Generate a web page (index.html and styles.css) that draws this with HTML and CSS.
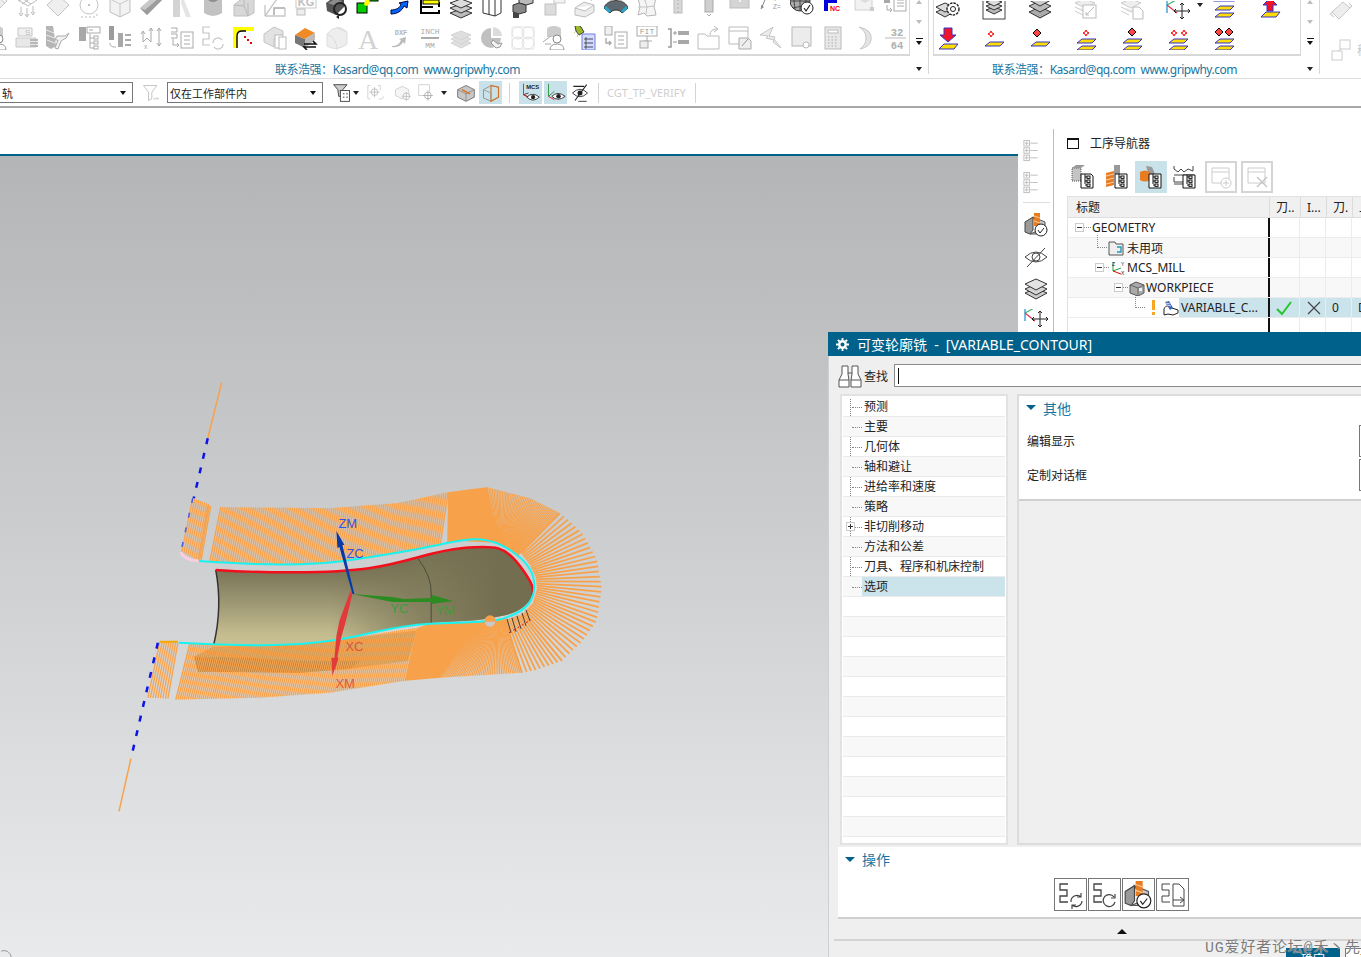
FILE: index.html
```html
<!DOCTYPE html>
<html lang="zh">
<head>
<meta charset="utf-8">
<title>可变轮廓铣</title>
<link rel="stylesheet" href="styles.css">
</head>
<body>
<svg class="defs" width="0" height="0">
<defs>
<symbol id="g-grid" viewBox="0 0 24 24"><path d="M3 5l9-5 10 5-9 6zM7 3l9 6M12 1l-8 5M16 3l-9 6" fill="none" stroke="#bdbdbd"/><path d="M6 12v7M12 13v8M18 11v7M4 18l2 3 2-3M10 19l2 3 2-3M16 17l2 3 2-3" fill="none" stroke="#bbb"/></symbol>
<symbol id="g-dia" viewBox="0 0 24 24"><path d="M12 0l11 10-11 11L1 10z" fill="#efefef" stroke="#c4c4c4"/></symbol>
<symbol id="g-circ" viewBox="0 0 24 24"><circle cx="12" cy="10" r="9" fill="none" stroke="#c4c4c4"/><circle cx="12" cy="10" r="1" fill="#aaa"/><path d="M4 22h14M20 19v4" stroke="#bbb" stroke-dasharray="2 2"/></symbol>
<symbol id="g-cyl" viewBox="0 0 24 24"><path d="M2 4v13l10 5 10-5V4L12 0z" fill="#f2f2f2" stroke="#c0c0c0"/><path d="M2 4l10 5 10-5M12 9v13" fill="none" stroke="#c8c8c8"/></symbol>
<symbol id="g-bar" viewBox="0 0 24 24"><path d="M1 13L16 0l7 5L8 20z" fill="#c8c8c8"/><path d="M1 13l7 7L23 5l-3-2L6 15z" fill="#9d9d9d"/></symbol>
<symbol id="g-k" viewBox="0 0 24 24"><path d="M3 0h7v22H3z" fill="#d4d4d4"/><path d="M12 0l9 22h-5L11 8z" fill="#e4e4e4"/></symbol>
<symbol id="g-ring" viewBox="0 0 24 24"><path d="M3 1h18v17q-9 6-18 0z" fill="#c2c2c2"/><ellipse cx="12" cy="4" rx="5" ry="3" fill="#8f8f8f"/></symbol>
<symbol id="g-block" viewBox="0 0 24 24"><path d="M2 10l10-8 10 2v14l-6 3H2z" fill="#d8d8d8" stroke="#c0c0c0"/><path d="M12 2v9l-10-1M12 11l4 10V8" fill="none" stroke="#b8b8b8"/></symbol>
<symbol id="g-tri" viewBox="0 0 24 24"><path d="M2 21L16 1M2 21V10M2 21h20v-8" fill="none" stroke="#c8c8c8" stroke-width="1.4"/><path d="M11 20v-7h11" fill="none" stroke="#aaa" stroke-width="1.5"/></symbol>
<symbol id="g-kg" viewBox="0 0 24 24"><rect x="2" y="0" width="20" height="13" fill="#fff" stroke="#c8c8c8"/><text x="12" y="11" font-size="11" font-weight="700" text-anchor="middle" fill="#bdbdbd" font-family="Liberation Sans">KG</text><rect x="3" y="14" width="8" height="6" fill="#eee" stroke="#bbb"/></symbol>
<symbol id="k-gear" viewBox="0 0 24 24"><path d="M1 8l8-6 10 2v8l-8 8-9-4z" fill="#555"/><path d="M3 8l7-4 7 2-6 5z" fill="#8b8b8b"/><circle cx="15" cy="14" r="6" fill="none" stroke="#222" stroke-width="2"/><path d="M14 20l-3 2 3 2z" fill="#222"/></symbol>
<symbol id="k-green" viewBox="0 0 24 24"><rect x="12" y="-3" width="10" height="9" fill="#0c0" stroke="#000"/><rect x="1" y="8" width="10" height="10" fill="#0c0" stroke="#000"/><path d="M9 5l4-1 1 4-3 3-3-1z" fill="#ff0"/></symbol>
<symbol id="k-prt" viewBox="0 0 24 24"><text x="12" y="4" font-size="8" font-weight="700" text-anchor="middle" fill="#00d" font-family="Liberation Mono">PRT</text><path d="M4 15c5 0 9-2 10-6l-2-1 9-2-1 7-3-2c-2 5-7 8-13 8z" fill="#06f" stroke="#003"/></symbol>
<symbol id="k-ladder" viewBox="0 0 24 24"><path d="M3 0v19M21 0v4M21 7v5M21 15v4" stroke="#000" stroke-width="2"/><rect x="5" y="5" width="16" height="4" fill="#ff0" stroke="#000"/><path d="M3 4h12M3 12h12M3 18h18" stroke="#000" stroke-width="2"/></symbol>
<symbol id="k-layers" viewBox="0 0 24 24"><g stroke="#333" fill="#bbb"><path d="M12 14l11 4-11 5-11-5z"/><path d="M12 9l11 4-11 5-11-5z" fill="#ccc"/><path d="M12 4l11 4-11 5L1 8z" fill="#ddd"/></g></symbol>
<symbol id="k-book" viewBox="0 0 24 24"><path d="M3 2l12-3 6 3v16l-6 3-12-3z" fill="#fff" stroke="#333"/><path d="M9 3v17M15 0v21" stroke="#333"/><path d="M3 2l6 1 12-1" fill="none" stroke="#333"/></symbol>
<symbol id="k-cubes" viewBox="0 0 24 24"><path d="M8 0l7-2 7 2v8l-7 2-7-2z" fill="#bbb" stroke="#333"/><path d="M2 10l6-2 7 2v7l-7 2-6-2z" fill="#888" stroke="#333"/><path d="M2 17l6 2v4H2z" fill="#444"/></symbol>
<symbol id="g-sq" viewBox="0 0 24 24"><rect x="12" y="-2" width="11" height="10" fill="#f4f4f4" stroke="#c8c8c8"/><rect x="3" y="9" width="11" height="11" fill="#dcdcdc" stroke="#c2c2c2"/></symbol>
<symbol id="g-blk2" viewBox="0 0 24 24"><path d="M2 13l9-6 10 3-9 6zM2 13v7l10 2 9-5v-7" fill="#ececec" stroke="#bdbdbd"/><path d="M14 4l4-2M18 6l3-5M22 2l2 3" stroke="#bbb" stroke-dasharray="1 2" fill="none"/></symbol>
<symbol id="k-pipe" viewBox="0 0 24 24"><path d="M0 13c3-10 21-10 24 0l-6 5c-3-4-9-4-12 0z" fill="#5e6870" stroke="#333"/><path d="M1 12l5 5M23 12l-5 5" stroke="#29a3c5" stroke-width="3"/><path d="M6 6q6-3 12 0" stroke="#aaa" fill="none"/></symbol>
<symbol id="g-patch" viewBox="0 0 24 24"><path d="M3 3l7 2 5-5 6 3-2 8 2 9-9 1-3-3-6 2 2-8z" fill="#f5f5f5" stroke="#b6b6b6"/><path d="M10 5l2 7-9 0M12 12l7-1M12 12l-1 7" stroke="#c4c4c4" fill="none"/></symbol>
<symbol id="g-col" viewBox="0 0 24 24"><rect x="8" y="-4" width="8" height="22" fill="#d8d8d8" stroke="#bcbcbc"/><path d="M12-4v22" stroke="#b0b0b0" stroke-dasharray="2 2"/></symbol>
<symbol id="g-col2" viewBox="0 0 24 24"><rect x="8" y="-4" width="8" height="21" fill="#cfcfcf" stroke="#a9a9a9"/><path d="M10 19l2 2 2-2" fill="none" stroke="#aaa"/></symbol>
<symbol id="g-plate" viewBox="0 0 24 24"><rect x="2" y="-6" width="19" height="19" fill="#d4d4d4" stroke="#bdbdbd"/><circle cx="12" cy="6" r="1" fill="#fff"/></symbol>
<symbol id="g-yz" viewBox="0 0 24 24"><path d="M9-2L2 14" stroke="#888"/><path d="M2 14l0-4 3 2z" fill="#888"/><text x="14" y="6" font-size="6.5" fill="#999" font-family="Liberation Sans">Y=</text><text x="14" y="14" font-size="6.5" fill="#999" font-family="Liberation Sans">Z=</text></symbol>
<symbol id="k-globe" viewBox="0 0 24 24"><circle cx="10" cy="6" r="10" fill="#aaa" stroke="#333"/><path d="M0 6h20M10-4v20M3-1q7 3 14 0M3 13q7-3 14 0M5-2q-2 8 0 16M15-2q2 8 0 16" fill="none" stroke="#333" stroke-width=".8"/><circle cx="17" cy="13" r="6" fill="#fff" stroke="#222"/><path d="M14 13l2 3 4-6" fill="none" stroke="#222" stroke-width="1.2"/></symbol>
<symbol id="k-pnc" viewBox="0 0 24 24"><path d="M3-4h13v12H7v8H3z M7 0v4h5V0z" fill="#00d" fill-rule="evenodd"/><text x="9" y="16" font-size="7" font-weight="700" fill="#f00" font-family="Liberation Sans">NC</text></symbol>
<symbol id="g-doc" viewBox="0 0 24 24"><path d="M3-2h17v17H3z" fill="#f2f2f2" stroke="#d0d0d0"/><path d="M8 5l5-3 5 3-5 3z" fill="#ddd"/><rect x="18" y="12" width="4" height="4" fill="#ccc"/></symbol>
<symbol id="g-arrl" viewBox="0 0 24 24"><rect x="1" y="-4" width="6" height="12" fill="#a8a8a8"/><path d="M4 10v5h5M7 13l2 2-2 2" fill="none" stroke="#aaa"/><rect x="11" y="0" width="12" height="16" fill="#fff" stroke="#aaa"/><path d="M14 5h7M14 8h7M14 11h7" stroke="#aaa"/></symbol>

<symbol id="g-stack" viewBox="0 0 24 24"><path d="M3 2h14v8H3z" fill="#f0f0f0" stroke="#c6c6c6"/><path d="M1 12h20v9H1z" fill="#e8e8e8" stroke="#c8c8c8"/><text x="10" y="9" font-size="8" fill="#bbb" font-family="Liberation Sans">S</text><path d="M15 14h8M15 17h8M15 20h8" stroke="#b8b8b8" stroke-width="2"/></symbol>
<symbol id="g-drill" viewBox="0 0 24 24"><path d="M0 0h7l3 20-5 3-5-3z" fill="#b5b5b5"/><path d="M0 4l8 3M0 9l9 3M1 14l8 3" stroke="#e8e8e8"/><path d="M11 10h8l4-3-3 5-5 3-3 8-3-1 3-8h-3z" fill="#f2f2f2" stroke="#aaa"/></symbol>
<symbol id="g-tree" viewBox="0 0 24 24"><rect x="2" y="1" width="7" height="14" fill="#a8a8a8"/><rect x="10" y="1" width="13" height="6" fill="#fff" stroke="#aaa"/><path d="M12 4h4" stroke="#aaa"/><path d="M13 8v14M13 12h4M13 17h4M13 22h4" stroke="#aaa" fill="none"/><rect x="17" y="10" width="4" height="3" fill="#fff" stroke="#aaa"/><rect x="17" y="15" width="4" height="3" fill="#fff" stroke="#aaa"/><rect x="17" y="20" width="4" height="3" fill="#fff" stroke="#aaa"/></symbol>
<symbol id="g-barl" viewBox="0 0 24 24"><rect x="1" y="0" width="5" height="14" fill="#9c9c9c"/><rect x="10" y="7" width="5" height="14" fill="#a8a8a8"/><path d="M2 17c0 4 3 4 6 4" fill="none" stroke="#aaa"/><path d="M17 9h6M17 14h6M17 19h6" stroke="#aaa" stroke-width="2"/></symbol>
<symbol id="g-axes" viewBox="0 0 24 24"><path d="M4 6v10l4-4 4 4V2M20 2v18M2 8l2-3 2 3M18 5l2-3 2 3M18 17l2 3 2-3M10 5l2-3 2 3" fill="none" stroke="#a8a8a8"/><text x="5" y="23" font-size="7" fill="#aaa" font-family="Liberation Sans">x</text></symbol>
<symbol id="g-ldoc" viewBox="0 0 24 24"><path d="M1 2h6v4H1M1 8h6v4H1" fill="none" stroke="#aaa"/><path d="M3 13v6h6M7 17l2 2-2 2" fill="none" stroke="#aaa"/><rect x="11" y="6" width="12" height="16" fill="#fff" stroke="#aaa"/><path d="M14 10h6M14 14h6M14 18h6" stroke="#aaa"/></symbol>
<symbol id="g-sloop" viewBox="0 0 24 24"><path d="M9 1H2v6h6v6H2v6h7" fill="none" stroke="#c4c4c4" stroke-width="1.2"/><path d="M12 17a5 5 0 0 1 9-3M22 18a5 5 0 0 1-9 3" fill="none" stroke="#c4c4c4" stroke-width="1.2"/></symbol>
<symbol id="c-yellow" viewBox="0 0 24 24"><rect x="1" y="1" width="21" height="21" fill="#ff0"/><path d="M5 22V9q0-4 4-4h13v17z" fill="#fff"/><path d="M5 22V10q0-5 5-5h4" fill="none" stroke="#000" stroke-width="1.4"/><path d="M12 10h2v2h-2zM15 13h2v2h-2zM18 16h2v2h-2z" fill="#e00"/></symbol>
<symbol id="g-copies" viewBox="0 0 24 24"><path d="M1 8l10-7 9 4v3l-9 5v8L1 16z" fill="#e2e2e2" stroke="#c4c4c4"/><rect x="12" y="9" width="8" height="13" fill="#fff" stroke="#bcbcbc"/><rect x="16" y="11" width="7" height="12" fill="#fff" stroke="#bcbcbc"/></symbol>
<symbol id="c-orange" viewBox="0 0 24 24"><path d="M1 9l10-7 10 5-10 6z" fill="#ef8a24"/><path d="M1 9l10 4v9L1 17z" fill="#777"/><path d="M11 13l10-6v7l-10 8z" fill="#bbb"/><path d="M10 18h12l-3-3M22 21H10l3 3" fill="none" stroke="#111" stroke-width="1.5"/></symbol>
<symbol id="g-surf" viewBox="0 0 24 24"><path d="M2 8q10-12 20-2v12q-10 8-20 2z" fill="#eee" stroke="#ddd"/><path d="M2 8q10 4 10 16M12 2q10 4 10 4" fill="none" stroke="#ddd"/></symbol>
<symbol id="g-a" viewBox="0 0 24 24"><text x="12" y="23" font-size="28" text-anchor="middle" fill="#d2d2d2" font-family="Liberation Serif">A</text></symbol>
<symbol id="g-dxf" viewBox="0 0 24 24"><text x="14" y="9" font-size="7" text-anchor="middle" fill="#b4b4b4" font-family="Liberation Mono" font-weight="700">DXF</text><path d="M5 20q7 0 9-6l-2-1 7-2-1 7-2-2q-3 6-11 5z" fill="#bbb"/></symbol>
<symbol id="g-inch" viewBox="0 0 24 24"><text x="12" y="8" font-size="8" text-anchor="middle" fill="#aaa" font-family="Liberation Mono">INCH</text><path d="M3 12h18" stroke="#aaa" stroke-width="2"/><text x="12" y="22" font-size="8" text-anchor="middle" fill="#aaa" font-family="Liberation Mono">MM</text></symbol>
<symbol id="g-lay2" viewBox="0 0 24 24"><g fill="#dfdfdf" stroke="#d4d4d4"><path d="M12 13l10 4-10 5-10-5z"/><path d="M12 9l10 4-10 5-10-5z"/><path d="M12 5l10 4-10 5L2 9z"/></g></symbol>
<symbol id="g-pie" viewBox="0 0 24 24"><path d="M11 2a10 10 0 1 0 10 10H11z" fill="#c0c0c0"/><path d="M13 1a9 9 0 0 1 9 9h-9z" fill="#dcdcdc"/><path d="M13 14l5 4 4-1-2 4-4 1-5-5z" fill="#f2f2f2" stroke="#999"/></symbol>
<symbol id="g-four" viewBox="0 0 24 24"><path d="M1 1h22v22H1z" fill="none" stroke="#e6e6e6"/><g fill="none" stroke="#e0e0e0"><circle cx="7" cy="7" r="6"/><circle cx="17" cy="7" r="6"/><circle cx="7" cy="17" r="6"/><circle cx="17" cy="17" r="6"/></g></symbol>
<symbol id="g-person" viewBox="0 0 24 24"><ellipse cx="12" cy="3" rx="7" ry="3" fill="#ccc"/><path d="M5 3v8h14V3" fill="#ccc"/><path d="M1 16l8-6M3 18h6" stroke="#aaa" fill="none"/><circle cx="15" cy="13" r="4" fill="#fff" stroke="#888"/><path d="M8 24q0-6 7-6t7 6z" fill="#fff" stroke="#999"/></symbol>
<symbol id="c-lamp" viewBox="0 0 24 24"><path d="M2 0l3-1 3 2 3 5-5 3-3-4z" fill="#9db82a" stroke="#444"/><path d="M3 5l-2 2M5 8l-1 3" stroke="#dc6"/><path d="M9 8h13v16H9z" fill="#d5dcfb" stroke="#6c7fdb"/><path d="M12 12h2v2h-2zM12 16h2v2h-2zM12 20h2v2h-2z" fill="none" stroke="#333" stroke-width=".8"/><path d="M15 13h5M15 17h5M15 21h5" stroke="#446"/></symbol>
<symbol id="g-c2l" viewBox="0 0 24 24"><rect x="1" y="0" width="7" height="9" fill="#f0f0f0" stroke="#aaa"/><path d="M2 12v5h5M5 15l2 2-2 2" fill="none" stroke="#aaa" stroke-width="1.4"/><rect x="11" y="6" width="12" height="16" fill="#fff" stroke="#aaa"/><path d="M14 10h6M14 14h6M14 18h6" stroke="#aaa"/></symbol>
<symbol id="g-fit" viewBox="0 0 24 24"><rect x="2" y="0" width="20" height="10" fill="#fff" stroke="#aaa"/><text x="12" y="8" font-size="8" text-anchor="middle" fill="#999" font-family="Liberation Mono">FIT</text><path d="M12 10v5M9 15h8" stroke="#aaa"/><rect x="5" y="15" width="8" height="7" fill="#eee" stroke="#aaa"/></symbol>
<symbol id="g-plus" viewBox="0 0 24 24"><path d="M2 3h3v18H2" fill="none" stroke="#999" stroke-width="1.5"/><path d="M7 7h4M9 5v4M7 16h4" stroke="#999"/><rect x="12" y="5" width="11" height="4" fill="#a8a8a8"/><rect x="12" y="14" width="11" height="4" fill="#a8a8a8"/></symbol>
<symbol id="g-folder" viewBox="0 0 24 24"><path d="M1 8h7l2 2h12v13H1z" fill="#fff" stroke="#bbb"/><path d="M13 9q0-6 7-6M17 0l4 3-4 3" fill="none" stroke="#bbb"/></symbol>
<symbol id="g-win" viewBox="0 0 24 24"><path d="M1 1h19v17H1zM1 5h19" fill="#fff" stroke="#bbb"/><path d="M11 12h9l3 3v8H11z" fill="#eee" stroke="#aaa"/><path d="M14 20l6-7" stroke="#999"/></symbol>
<symbol id="g-bolt" viewBox="0 0 24 24"><path d="M14 1L1 9l8 1-2 2 8 2-1 2 8 6-7-9 1-2-6-1z" fill="#ececec" stroke="#c4c4c4"/></symbol>
<symbol id="g-pg" viewBox="0 0 24 24"><rect x="2" y="1" width="19" height="19" fill="#ececec" stroke="#b8b8b8"/><circle cx="16" cy="19" r="3" fill="#fff" stroke="#bbb"/></symbol>
<symbol id="g-calc" viewBox="0 0 24 24"><rect x="4" y="1" width="16" height="22" fill="#e8e8e8" stroke="#bbb"/><rect x="7" y="4" width="10" height="3" fill="#fff" stroke="#bbb"/><path d="M7 11h10M7 14h10M7 17h10M7 20h10" stroke="#aaa" stroke-dasharray="1.5 2"/></symbol>
<symbol id="g-moon" viewBox="0 0 24 24"><path d="M7 1q14 3 12 13-1 7-11 9 6-4 6-11T7 1z" fill="#e4e4e4" stroke="#c8c8c8"/></symbol>
<symbol id="g-frac" viewBox="0 0 24 24"><text x="14" y="10" font-size="10.5" text-anchor="middle" fill="#b0b0b0" font-weight="700" font-family="Liberation Mono">32</text><path d="M2 12h21" stroke="#bbb"/><text x="14" y="23" font-size="10.5" text-anchor="middle" fill="#b0b0b0" font-weight="700" font-family="Liberation Mono">64</text></symbol>

<symbol id="k-laygear" viewBox="0 0 24 24"><g stroke="#333" fill="#ccc"><path d="M9 7l9 4-9 5-9-5z"/><path d="M9 2l9 4-9 5-9-5z" fill="#ddd"/></g><circle cx="17" cy="8" r="6" fill="#fff" stroke="#222" stroke-width="1.4" stroke-dasharray="2.5 1"/><circle cx="17" cy="8" r="2.5" fill="#fff" stroke="#222"/></symbol>
<symbol id="k-boxlay" viewBox="0 0 24 24"><rect x="1" y="-6" width="22" height="24" fill="#fff" stroke="#444"/><g stroke="#333" fill="#bbb"><path d="M12 6l8 3-8 4-8-4z"/><path d="M12 2l8 3-8 4-8-4z" fill="#ccc"/><path d="M12-2l8 3-8 4-8-4z" fill="#ddd"/></g></symbol>
<symbol id="k-lay3" viewBox="0 0 24 24"><g stroke="#333" fill="#aaa"><path d="M12 6l11 5-11 6-11-6z"/><path d="M12 0l11 5-11 6L1 5z" fill="#bbb"/><path d="M12-6l11 5-11 6L1-1z" fill="#ccc"/></g></symbol>
<symbol id="g-layed" viewBox="0 0 24 24"><path d="M11-2l10 4-10 5L1 2zM1 6l10 5 4-2M1 10l8 4" fill="#eee" stroke="#ccc"/><rect x="9" y="4" width="13" height="13" fill="#fff" stroke="#bbb"/><path d="M12 14l8-8M12 14v-3M12 14h3" stroke="#bbb" fill="none"/></symbol>
<symbol id="g-laydoc" viewBox="0 0 24 24"><path d="M11-2l10 4-10 5L1 2zM1 6l10 5 4-2M1 10l8 4" fill="#eee" stroke="#ccc"/><path d="M13 6h6l4 4v8H13z" fill="#fff" stroke="#bbb"/></symbol>
<symbol id="k-move" viewBox="0 0 24 24"><path d="M1-2v14" stroke="#1a8fd0" stroke-width="1.2"/><path d="M1 4L12-2" stroke="#3cb371" stroke-width="1.2"/><path d="M1 4l10 8" stroke="#e0324a" stroke-width="1.2"/><path d="M16 2v16M8 10h16M14 4l2-2 2 2M14 16l2 2 2-2M10 8l-2 2 2 2M22 8l2 2-2 2" fill="none" stroke="#222"/></symbol>
<symbol id="c-mpl" viewBox="0 0 24 24"><rect x="2" y="-8" width="20" height="8" fill="#fff" stroke="#33c"/><path d="M3 9h15l4-4H8zM3 16h15l4-4H8z" fill="#fd0" stroke="#33c"/></symbol>
<symbol id="c-up" viewBox="0 0 24 24"><path d="M9 10V4H5l7-7 7 7h-4v6z" fill="#f01428" stroke="#33c"/><path d="M3 16h15l4-5H8z" fill="#fd0" stroke="#33c"/></symbol>
<symbol id="c-down" viewBox="0 0 24 24"><path d="M8 2h8v7h4l-8 7-8-7h4z" fill="#f01428" stroke="#33c"/><path d="M3 23h15l4-5H8z" fill="#fd0" stroke="#33c"/></symbol>
<symbol id="c-s1" viewBox="0 0 24 24"><path d="M8 7l1-2 1 2 2 1-2 1-1 2-1-2-2-1z" fill="#fff" stroke="#f00"/><path d="M3 20h15l4-4H8z" fill="#fd0" stroke="#33c"/></symbol>
<symbol id="c-d1" viewBox="0 0 24 24"><path d="M9 3l4 4-4 4-4-4z" fill="#f44" stroke="#000"/><path d="M3 20h15l4-4H8z" fill="#fd0" stroke="#33c"/></symbol>
<symbol id="c-s2" viewBox="0 0 24 24"><path d="M11 6l1-2 1 2 2 1-2 1-1 2-1-2-2-1z" fill="#fff" stroke="#f00"/><path d="M3 17h15l4-4H8zM3 24h15l4-4H8z" fill="#fd0" stroke="#33c"/></symbol>
<symbol id="c-d2" viewBox="0 0 24 24"><path d="M12 2l4 4-4 4-4-4z" fill="#f44" stroke="#000"/><path d="M3 17h15l4-4H8zM3 24h15l4-4H8z" fill="#fd0" stroke="#33c"/></symbol>
<symbol id="c-ss2" viewBox="0 0 24 24"><path d="M7 6l1-2 1 2 2 1-2 1-1 2-1-2-2-1zM17 6l1-2 1 2 2 1-2 1-1 2-1-2-2-1z" fill="#fff" stroke="#f00"/><path d="M3 17h15l4-4H8zM3 24h15l4-4H8z" fill="#fd0" stroke="#33c"/></symbol>
<symbol id="c-dd2" viewBox="0 0 24 24"><path d="M7 2l4 4-4 4-4-4zM17 2l4 4-4 4-4-4z" fill="#f44" stroke="#000"/><path d="M3 17h15l4-4H8zM3 24h15l4-4H8z" fill="#fd0" stroke="#33c"/></symbol>
<symbol id="g-roll" viewBox="0 0 24 24"><path d="M3 12L14 2l7 6-11 11zM3 12l-2 2 4 3M21 8l2-2-3-3" fill="#eee" stroke="#c8c8c8"/></symbol>
<symbol id="g-twosq" viewBox="0 0 24 24"><rect x="11" y="2" width="10" height="9" fill="#fff" stroke="#ccc"/><rect x="3" y="13" width="10" height="9" fill="#fff" stroke="#ccc"/><path d="M12 11l-3 2" stroke="#ccc"/></symbol>

<symbol id="t-filter" viewBox="0 0 24 24"><path d="M3 3h16l-6 8v8l-4 2V11z" fill="#fff" stroke="#bbb"/><path d="M15 19h6l-2-2" fill="none" stroke="#bbb"/></symbol>
<symbol id="t-fdoc" viewBox="0 0 24 24"><path d="M2 2h16l-5 6v8H8l-1-8z" fill="#ccc" stroke="#333"/><rect x="10" y="9" width="11" height="13" fill="#fff" stroke="#333"/><path d="M13 13h2M17 13h2M13 17h2M17 17h2" stroke="#333"/></symbol>
<symbol id="t-sel1" viewBox="0 0 24 24"><path d="M4 3H1v16h3M13 3h3v6" fill="none" stroke="#ccc"/><circle cx="9" cy="11" r="4" fill="none" stroke="#bbb"/><path d="M9 5v12M3 11h12" stroke="#bbb"/><path d="M14 19q5 1 6-3" fill="none" stroke="#ccc"/></symbol>
<symbol id="t-sel2" viewBox="0 0 24 24"><path d="M3 8l8-4 8 4v7l-8 4-8-4z" fill="#f5f5f5" stroke="#ccc"/><circle cx="16" cy="16" r="4" fill="#fff" stroke="#bbb"/><path d="M16 11v10M11 16h10" stroke="#bbb"/></symbol>
<symbol id="t-sel3" viewBox="0 0 24 24"><path d="M2 2h13v13H2z" fill="#fff" stroke="#ccc"/><circle cx="13" cy="15" r="4" fill="#fff" stroke="#aaa"/><path d="M13 9v12M7 15h12" stroke="#aaa"/></symbol>
<symbol id="t-cube1" viewBox="0 0 24 24"><path d="M2 8l10-5 10 5v9l-10 5-10-5z" fill="#c8c8c8" stroke="#666"/><path d="M2 8l10 5 10-5M12 13v9" fill="none" stroke="#888"/><path d="M7 8l10 5" stroke="#d8701c" stroke-width="1.6"/></symbol>
<symbol id="t-cube2" viewBox="0 0 24 24"><path d="M3 8l9-5 9 2v12l-9 5-9-4z" fill="none" stroke="#888"/><path d="M12 3l9 2v12l-9 5z" fill="none" stroke="#d8701c" stroke-width="1.4"/><path d="M3 8l9 4v10" fill="none" stroke="#999"/></symbol>
<symbol id="t-mcs" viewBox="0 0 24 24"><path d="M3 1v13l6-2M3 14l8 4" fill="none" stroke="#333"/><path d="M3 1v13" stroke="#2a9a3a"/><path d="M3 14l8 4" stroke="#e00"/><text x="14" y="7" font-size="7" font-weight="700" text-anchor="middle" fill="#222" font-family="Liberation Sans">MCS</text><path d="M7 17q7-7 15 0-8 7-15 0z" fill="#fff" stroke="#222"/><circle cx="14.5" cy="17" r="2.5" fill="#222"/></symbol>
<symbol id="t-eye" viewBox="0 0 24 24"><path d="M3 1v15" stroke="#1d8a30"/><path d="M3 16l7 4" stroke="#e00"/><path d="M3 16l7-6" stroke="#2a7a3a"/><path d="M7 16q7-7 16 0-9 7-16 0z" fill="#fff" stroke="#222"/><circle cx="15" cy="16" r="2.7" fill="#222"/></symbol>
<symbol id="t-eyex" viewBox="0 0 24 24"><path d="M3 12q9-9 18 0-9 9-18 0z" fill="#fff" stroke="#222"/><circle cx="12" cy="12" r="3" fill="#222"/><path d="M4 4h13M6 21L20 2" stroke="#222" stroke-width="1.3"/><path d="M10 22h10" stroke="#222"/></symbol>

<symbol id="n-mini1" viewBox="0 0 24 24"><g fill="none" stroke="#bbb"><rect x="1" y="1" width="6" height="6"/><rect x="1" y="9" width="6" height="6"/><rect x="1" y="17" width="6" height="6"/><path d="M2 4h4M4 2v4M2 12h4M4 10v4M2 20h4M4 18v4M8 4h8M8 12h8M8 20h8"/></g></symbol>
<symbol id="n-mill" viewBox="0 0 24 24"><path d="M1 9l8-5v13l-3 4-5-2z" fill="#9a9a9a" stroke="#444"/><path d="M9 4l12 5v6l-8 6-7 0 10-4z" fill="#c8c8c8" stroke="#555"/><rect x="10" y="-1" width="6" height="14" fill="#e87c22"/><path d="M10 3l6 2M10 8l6 2" stroke="#ffc48a"/><circle cx="17" cy="17" r="6" fill="#fff" stroke="#222"/><path d="M14 17l2 3 4-5" fill="none" stroke="#222"/></symbol>
<symbol id="n-eyex" viewBox="0 0 24 24"><path d="M1 12q11-10 22 0-11 10-22 0z" fill="#fff" stroke="#444"/><circle cx="12" cy="12" r="4" fill="none" stroke="#444"/><path d="M3 22L21 3" stroke="#444"/></symbol>
<symbol id="n-lay" viewBox="0 0 24 24"><g stroke="#333" fill="#ccc"><path d="M12 11l11 5-11 6-11-6z"/><path d="M12 7l11 5-11 6-11-6z" fill="#d4d4d4"/><path d="M12 2l11 5-11 6L1 7z" fill="#e4e4e4"/></g></symbol>
<symbol id="n-geo" viewBox="0 0 24 24"><rect x="1" y="3" width="9" height="13" fill="#c4c4c4" stroke="#555" stroke-dasharray="1 1"/><path d="M1 3l4-3h9l-4 3z" fill="#999"/><path d="M10 9h10l2 2v12H10z" fill="#fff" stroke="#111"/><path d="M14 9v10M14 12h2M14 16h2M14 20h2" stroke="#111" fill="none"/><rect x="16" y="11" width="3" height="2.4" fill="none" stroke="#111"/><rect x="16" y="15" width="3" height="2.4" fill="none" stroke="#111"/><rect x="16" y="19" width="3" height="2.4" fill="none" stroke="#111"/></symbol>
<symbol id="n-tool" viewBox="0 0 24 24"><path d="M1 8l8-2v14l-8 2z" fill="#e87c22"/><path d="M1 11l8-2M1 15l8-2M1 19l8-2" stroke="#ffd2a8"/><rect x="9" y="0" width="6" height="9" fill="#999"/><path d="M10 9h12v14H10z" fill="#fff" stroke="#111"/><path d="M14 9v10M14 12h2M14 16h2M14 20h2" stroke="#111" fill="none"/><rect x="16" y="11" width="3" height="2.4" fill="none" stroke="#111"/><rect x="16" y="15" width="3" height="2.4" fill="none" stroke="#111"/><rect x="16" y="19" width="3" height="2.4" fill="none" stroke="#111"/></symbol>
<symbol id="n-axis" viewBox="0 0 24 24"><path d="M7 1l6 1 6 14-6 3z" fill="#999"/><path d="M1 7q5-3 10 0v8q-5 3-10 0z" fill="#e87c22"/><path d="M10 9h12v14H10z" fill="#fff" stroke="#111"/><path d="M14 9v10M14 12h2M14 16h2M14 20h2" stroke="#111" fill="none"/><rect x="16" y="11" width="3" height="2.4" fill="none" stroke="#111"/><rect x="16" y="15" width="3" height="2.4" fill="none" stroke="#111"/><rect x="16" y="19" width="3" height="2.4" fill="none" stroke="#111"/></symbol>
<symbol id="n-crown" viewBox="0 0 24 24"><path d="M1 1v3l4 3 3-3 3 3 4-3 5 2V1M1 10h20M1 12v5h9M1 19h9" fill="none" stroke="#444"/><path d="M10 10h12v13H10z" fill="#fff" stroke="#111"/><path d="M14 10v9M14 12h2M14 16h2M14 20h2" stroke="#111" fill="none"/><rect x="16" y="11" width="3" height="2.4" fill="none" stroke="#111"/><rect x="16" y="15" width="3" height="2.4" fill="none" stroke="#111"/><rect x="16" y="19" width="3" height="2.4" fill="none" stroke="#111"/></symbol>
<symbol id="n-add" viewBox="0 0 24 24"><path d="M3 3h17v15H3zM3 7h17" fill="none" stroke="#ccc"/><circle cx="17" cy="18" r="5" fill="#fff" stroke="#ccc"/><path d="M17 15v6M14 18h6" stroke="#ccc"/></symbol>
<symbol id="n-del" viewBox="0 0 24 24"><path d="M3 3h17v15H3zM3 7h17" fill="none" stroke="#ccc"/><path d="M12 12l10 10M22 12L12 22" stroke="#c4c4c4" stroke-width="1.4"/></symbol>
<symbol id="f-folder" viewBox="0 0 16 16"><path d="M1 2h6l1 2h7v11H1z" fill="#eee" stroke="#555"/><path d="M9 7h4v5H9" fill="none" stroke="#1e9ac0" stroke-width="1.4"/></symbol>
<symbol id="f-mcs" viewBox="0 0 16 16"><path d="M3 2v9" stroke="#2a9a3a"/><path d="M3 11l8-3" stroke="#2a9a3a"/><path d="M3 11l8 3" stroke="#e00"/><text x="2" y="6" font-size="5" fill="#222" font-family="Liberation Sans">Z</text><text x="11" y="6" font-size="5" fill="#222" font-family="Liberation Sans">Y</text><text x="11" y="15" font-size="5" fill="#222" font-family="Liberation Sans">X</text></symbol>
<symbol id="f-wp" viewBox="0 0 16 16"><path d="M1 5l6-3 8 3v8l-6 3-8-3z" fill="#aaa" stroke="#555"/><path d="M1 5l8 3 6-3M9 8v8" fill="none" stroke="#666"/><rect x="10" y="8" width="3" height="3" fill="#eee"/></symbol>
<symbol id="f-var" viewBox="0 0 16 16"><path d="M1 9c2-5 6-3 8-1l6 2v3l-5 2-5-1-4 1z" fill="#fff" stroke="#222"/><path d="M2 2l4-1 4 7-3 2z" fill="#3c5fb8"/><path d="M3 3l4 1M4 5l4 1" stroke="#dde"/></symbol>
<symbol id="d-bino" viewBox="0 0 24 24"><path d="M4 2h6v8l1 6v7H1v-7l3-6zM14 2h6v8l3 6v7H13v-7l1-6z" fill="#fff" stroke="#555"/><path d="M10 9h4M1 16h10M13 16h10" stroke="#555"/></symbol>
<symbol id="o-s1" viewBox="0 0 28 28"><path d="M12 3H4v6h7v6H4v6h8" fill="none" stroke="#444" stroke-width="1.3"/><path d="M15 21a6 6 0 0 1 10-5M26 20a6 6 0 0 1-10 4M25 12v4h-4M16 28v-4h4" fill="none" stroke="#444" stroke-width="1.2"/></symbol>
<symbol id="o-s2" viewBox="0 0 28 28"><path d="M12 3H4v6h7v6H4v6h8" fill="none" stroke="#444" stroke-width="1.3"/><path d="M24 16a6 6 0 1 0 1 5M25 13v4h-4" fill="none" stroke="#444" stroke-width="1.2"/></symbol>
<symbol id="o-s3" viewBox="0 0 28 28"><path d="M12 3H4v6h7v6H4v6h8M15 3h6l5 5v17H15z" fill="none" stroke="#444"/><path d="M15 19h11M22 16l4 3-4 3" fill="#fff" stroke="#444"/></symbol>
</defs>
</svg>

<div class="app">
  <header class="ribbon">
    <section class="group g1">
      <div class="panel">
        <div class="boxes">
          <div class="row r31">
            <svg class="ic"><use href="#g-roll"/></svg><svg class="ic"><use href="#g-grid"/></svg><svg class="ic"><use href="#g-dia"/></svg><svg class="ic"><use href="#g-circ"/></svg><svg class="ic"><use href="#g-cyl"/></svg><svg class="ic"><use href="#g-bar"/></svg><svg class="ic"><use href="#g-k"/></svg><svg class="ic"><use href="#g-ring"/></svg><svg class="ic"><use href="#g-block"/></svg><svg class="ic"><use href="#g-tri"/></svg><svg class="ic"><use href="#g-kg"/></svg><svg class="ic"><use href="#k-gear"/></svg><svg class="ic"><use href="#k-green"/></svg><svg class="ic"><use href="#k-prt"/></svg><svg class="ic"><use href="#k-ladder"/></svg><svg class="ic"><use href="#k-layers"/></svg><svg class="ic"><use href="#k-book"/></svg><svg class="ic"><use href="#k-cubes"/></svg><svg class="ic"><use href="#g-sq"/></svg><svg class="ic"><use href="#g-blk2"/></svg><svg class="ic"><use href="#k-pipe"/></svg><svg class="ic"><use href="#g-patch"/></svg><svg class="ic"><use href="#g-col"/></svg><svg class="ic"><use href="#g-col2"/></svg><svg class="ic"><use href="#g-plate"/></svg><svg class="ic"><use href="#g-yz"/></svg><svg class="ic"><use href="#k-globe"/></svg><svg class="ic"><use href="#k-pnc"/></svg><svg class="ic"><use href="#g-doc"/></svg><svg class="ic"><use href="#g-arrl"/></svg>
          </div>
          <div class="row r31">
            <svg class="ic"><use href="#g-person"/></svg><svg class="ic"><use href="#g-stack"/></svg><svg class="ic"><use href="#g-drill"/></svg><svg class="ic"><use href="#g-tree"/></svg><svg class="ic"><use href="#g-barl"/></svg><svg class="ic"><use href="#g-axes"/></svg><svg class="ic"><use href="#g-ldoc"/></svg><svg class="ic"><use href="#g-sloop"/></svg><svg class="ic"><use href="#c-yellow"/></svg><svg class="ic"><use href="#g-copies"/></svg><svg class="ic"><use href="#c-orange"/></svg><svg class="ic"><use href="#g-surf"/></svg><svg class="ic"><use href="#g-a"/></svg><svg class="ic"><use href="#g-dxf"/></svg><svg class="ic"><use href="#g-inch"/></svg><svg class="ic"><use href="#g-lay2"/></svg><svg class="ic"><use href="#g-pie"/></svg><svg class="ic"><use href="#g-four"/></svg><svg class="ic"><use href="#g-person"/></svg><svg class="ic"><use href="#c-lamp"/></svg><svg class="ic"><use href="#g-c2l"/></svg><svg class="ic"><use href="#g-fit"/></svg><svg class="ic"><use href="#g-plus"/></svg><svg class="ic"><use href="#g-folder"/></svg><svg class="ic"><use href="#g-win"/></svg><svg class="ic"><use href="#g-bolt"/></svg><svg class="ic"><use href="#g-pg"/></svg><svg class="ic"><use href="#g-calc"/></svg><svg class="ic"><use href="#g-moon"/></svg><svg class="ic"><use href="#g-frac"/></svg>
          </div>
        </div>
        <div class="scroller"><i class="tri-up"></i><i class="tri-dn"></i><i class="more"></i></div>
      </div>
      <div class="caption cap1"><span>联系浩强：Kasard@qq.com&nbsp; www.gripwhy.com</span><i class="tri-mini"></i></div>
    </section>
    <section class="group g2">
      <div class="panel">
        <div class="boxes">
          <div class="row r46">
            <svg class="ic"><use href="#k-laygear"/></svg><svg class="ic"><use href="#k-boxlay"/></svg><svg class="ic"><use href="#k-lay3"/></svg><svg class="ic"><use href="#g-layed"/></svg><svg class="ic"><use href="#g-laydoc"/></svg><span class="withcaret"><svg class="ic"><use href="#k-move"/></svg><i class="tri-mini"></i></span><svg class="ic"><use href="#c-mpl"/></svg><svg class="ic"><use href="#c-up"/></svg>
          </div>
          <div class="row r46">
            <svg class="ic"><use href="#c-down"/></svg><svg class="ic"><use href="#c-s1"/></svg><svg class="ic"><use href="#c-d1"/></svg><svg class="ic"><use href="#c-s2"/></svg><svg class="ic"><use href="#c-d2"/></svg><svg class="ic"><use href="#c-ss2"/></svg><svg class="ic"><use href="#c-dd2"/></svg>
          </div>
        </div>
        <div class="scroller"><i class="tri-up"></i><i class="tri-dn"></i><i class="more"></i></div>
      </div>
      <div class="caption cap2"><span>联系浩强：Kasard@qq.com&nbsp; www.gripwhy.com</span><i class="tri-mini"></i></div>
    </section>
    <section class="g3">
      <svg class="ic"><use href="#g-roll"/></svg>
      <div class="g3-row"><svg class="ic"><use href="#g-twosq"/></svg><span>移</span></div>
    </section>
  </header>

  <nav class="toolbar">
    <div class="select s1"><span>轨</span><i class="tri-sel"></i></div>
    <svg class="ti ti-filter"><use href="#t-filter"/></svg>
    <div class="select s2"><span>仅在工作部件内</span><i class="tri-sel"></i></div>
    <svg class="ti ti-a"><use href="#t-fdoc"/></svg><i class="tri-mini car-a"></i>
    <svg class="ti ti-b"><use href="#t-sel1"/></svg>
    <svg class="ti ti-c"><use href="#t-sel2"/></svg>
    <svg class="ti ti-d"><use href="#t-sel3"/></svg><i class="tri-mini car-b"></i>
    <svg class="ti ti-e"><use href="#t-cube1"/></svg>
    <span class="on ti-f"><svg class="ti"><use href="#t-cube2"/></svg></span>
    <span class="tsep sep-a"></span>
    <span class="on ti-g"><svg class="ti"><use href="#t-mcs"/></svg></span>
    <span class="on ti-h"><svg class="ti"><use href="#t-eye"/></svg></span>
    <svg class="ti ti-i"><use href="#t-eyex"/></svg>
    <span class="tsep sep-b"></span>
    <span class="verify">CGT_TP_VERIFY</span>
    <span class="tsep sep-c"></span>
  </nav>

  <main class="work">
    <div class="viewport">
      <svg class="scene" viewBox="0 154 1018 803" width="1018" height="803">
        <defs>
          <linearGradient id="surfV" x1="0" y1="0" x2="0" y2="1">
            <stop offset="0" stop-color="#57523e"/>
            <stop offset=".25" stop-color="#7a7558"/>
            <stop offset=".6" stop-color="#a09a76"/>
            <stop offset=".9" stop-color="#c5bd8f"/>
            <stop offset="1" stop-color="#c9c193"/>
          </linearGradient>
          <linearGradient id="surfH" gradientUnits="userSpaceOnUse" x1="330" y1="0" x2="500" y2="0">
            <stop offset="0" stop-color="#7a7556" stop-opacity="0"/>
            <stop offset=".55" stop-color="#7d7857" stop-opacity=".8"/>
            <stop offset="1" stop-color="#736e50" stop-opacity="1"/>
          </linearGradient>
        </defs>
        <g id="under">
          <polygon class="brown" points="212,646 193,656 197,671 300,672 350,668 408,660 416,630 363,636 277,644"/>
          <polygon class="brown2" points="193,656 197,671 300,672 350,668 360,660 300,660 250,657"/>
          <polygon class="solid" points="448,491 470,488 487,486 492,512 505,541 497,542 463,540 447,542"/>
          <polygon class="solid" points="417,627 430,623 480,621 440,677 405,680"/>
        </g>
        <g id="hatch"></g>
        <path class="surf" d="M215 569C260 572 330 573 370 567S430 550 463 547 505 545 520 565 534 590 532 594C530 603 518 612 503 615S480 620 450 621 380 630 340 638 260 643 213 644Q222 606 215 569Z"/>
        <path class="surf-h" d="M215 569C260 572 330 573 370 567S430 550 463 547 505 545 520 565 534 590 532 594C530 603 518 612 503 615S480 620 450 621 380 630 340 638 260 643 213 644Q222 606 215 569Z"/>
        <path class="seam" d="M418 558q14 18 13 36v28"/>
        <path class="edge-d" d="M215 569Q222 606 213 644"/>
        <path class="edge-r" d="M215 569C260 572 330 573 370 567S430 550 463 547 505 545 520 565 534 590 532 594"/>
        <path class="edge-c" d="M198 560C240 563 300 566 343 560S420 548 447 542 490 536 510 549 536 575 534 590 520 612 505 617 470 621 430 623 370 634 330 640 240 645 178 642"/>
        <path class="edge-p" d="M180 551q3 8 18 9"/>
        <path class="edge-y" d="M159 641h18"/>
        <path class="line-o" d="M221 381l-14 56M130 758l-12 53"/>
        <path class="dash-b" d="M207 437l-14 60M157 642l-27 116"/>
        <path class="dash-f" d="M192 497l-12 54"/>
        <path class="ticks" d="M507 618l4 14M512 617l4 14M517 615l4 13M522 612l4 13M526 609l4 11"/>
        <path class="ticks-r" d="M509 632l22-13"/>
        <circle class="dot" cx="490" cy="620" r="5.500"/>
        <path class="dot-in" d="M485 621a5 5 0 0 0 10 0z"/>
        <path class="ax-g" d="M352 593l40 3 12 2 28-1v-3l21 6-21 3v-2l-28 0-12 0z"/>
        <path class="ax-b" d="M352 593l-13-47-2 1 -1-17 8 14-2 0 12 49z"/>
        <path class="ax-r" d="M352 593l-7 29-4 14-4 20 1 2-6 17-1-18 3 0 2-22 3-15 11-30z"/>
        <text class="lb lb-b" x="338" y="527">ZM</text>
        <text class="lb lb-b" x="346" y="557">ZC</text>
        <text class="lb lb-g" x="390" y="612">YC</text>
        <text class="lb lb-g" x="435" y="614">YM</text>
        <text class="lb lb-r" x="345" y="650">XC</text>
        <text class="lb lb-r" x="335" y="687">XM</text>
        <path class="corner" d="M0 951q8-2 10 6"/>
      </svg>
    </div>
    <aside class="side">
      <svg class="mini"><use href="#n-mini1"/></svg>
      <svg class="mini"><use href="#n-mini1"/></svg>
      <hr class="side-sep">
      <svg class="sic"><use href="#n-mill"/></svg>
      <svg class="sic"><use href="#n-eyex"/></svg>
      <svg class="sic"><use href="#n-lay"/></svg>
      <svg class="sic"><use href="#k-move"/></svg>
    </aside>
    <section class="nav">
      <div class="nav-title"><i class="chk"></i><span>工序导航器</span></div>
      <div class="nav-tools">
        <svg class="ni n1"><use href="#n-geo"/></svg>
        <svg class="ni n2"><use href="#n-tool"/></svg>
        <span class="ni-on"><svg class="ni"><use href="#n-axis"/></svg></span>
        <svg class="ni n4"><use href="#n-crown"/></svg>
        <span class="ni-box nb1"><svg class="ni"><use href="#n-add"/></svg></span>
        <span class="ni-box nb2"><svg class="ni"><use href="#n-del"/></svg></span>
      </div>
      <div class="tbl">
        <div class="thead"><span class="c0">标题</span><span class="c1">刀..</span><span class="c2">I...</span><span class="c3">刀.</span><span class="c4">上</span></div>
        <div class="tr">
          <span class="c0 lv1"><i class="tg"></i><i class="stub s7"></i><b>GEOMETRY</b></span><span class="c1"></span><span class="c2"></span><span class="c3"></span><span class="c4"></span>
        </div>
        <div class="tr alt">
          <span class="c0 lv2"><i class="stub s9 up"></i><svg class="fi"><use href="#f-folder"/></svg><b>未用项</b></span><span class="c1"></span><span class="c2"></span><span class="c3"></span><span class="c4"></span>
        </div>
        <div class="tr">
          <span class="c0 lv3"><i class="tg"></i><i class="stub s5"></i><svg class="fi"><use href="#f-mcs"/></svg><b>MCS_MILL</b></span><span class="c1"></span><span class="c2"></span><span class="c3"></span><span class="c4"></span>
        </div>
        <div class="tr alt">
          <span class="c0 lv4"><i class="tg"></i><i class="stub s5"></i><svg class="fi"><use href="#f-wp"/></svg><b>WORKPIECE</b></span><span class="c1"></span><span class="c2"></span><span class="c3"></span><span class="c4"></span>
        </div>
        <div class="tr sel">
          <span class="c0 lv5"><i class="stub s9 up"></i><i class="warn"></i><svg class="fi"><use href="#f-var"/></svg><b class="selname">VARIABLE_C...</b></span>
          <span class="c1 hl"><svg class="mark" viewBox="0 0 16 16"><path class="ok" d="M1 9l5 5L15 2"/></svg></span>
          <span class="c2 hl"><svg class="mark" viewBox="0 0 16 16"><path class="no" d="M2 2l12 12M14 2L2 14"/></svg></span>
          <span class="c3 hl">0</span><span class="c4 hl">D</span>
        </div>
        <div class="tr"><span class="c0"></span><span class="c1"></span><span class="c2"></span><span class="c3"></span><span class="c4"></span></div>
      </div>
    </section>

    <div class="dialog">
      <div class="dlg-title">
        <svg class="dlg-gear" viewBox="0 0 16 16"><circle cx="8" cy="8" r="4" fill="none" stroke="#fff" stroke-width="3"/><path d="M8 0v3M8 13v3M0 8h3M13 8h3M2.300 2.300l2 2M11.700 11.700l2 2M2.300 13.700l2-2M11.700 4.300l2-2" stroke="#fff" stroke-width="2.200"/></svg>
        <span>可变轮廓铣 - [VARIABLE_CONTOUR]</span>
      </div>
      <div class="search">
        <svg class="bino"><use href="#d-bino"/></svg>
        <span class="search-l">查找</span>
        <div class="search-in"><i class="caret"></i></div>
      </div>
      <div class="dlg-body">
        <ul class="tree">
          <li>预测</li><li>主要</li><li>几何体</li><li>轴和避让</li><li>进给率和速度</li><li>策略</li>
          <li class="plus"><i class="tg tg-p"></i>非切削移动</li><li>方法和公差</li><li>刀具、程序和机床控制</li><li class="cur"><span>选项</span></li>
          <li class="e"></li><li class="e"></li><li class="e"></li><li class="e"></li><li class="e"></li><li class="e"></li><li class="e"></li><li class="e"></li><li class="e"></li><li class="e"></li><li class="e"></li><li class="e"></li>
        </ul>
        <div class="pane">
          <div class="card">
            <div class="sec-h"><i class="tri-sec"></i><span>其他</span></div>
            <div class="prop"><span>编辑显示</span><i class="pbtn"></i></div>
            <div class="prop"><span>定制对话框</span><i class="pbtn"></i></div>
          </div>
        </div>
      </div>
      <div class="ops">
        <div class="sec-h"><i class="tri-sec"></i><span>操作</span></div>
        <div class="ops-btns">
          <span class="obtn"><svg><use href="#o-s1"/></svg></span>
          <span class="obtn"><svg><use href="#o-s2"/></svg></span>
          <span class="obtn"><svg><use href="#n-mill"/></svg></span>
          <span class="obtn"><svg><use href="#o-s3"/></svg></span>
        </div>
      </div>
      <div class="collapse"><i class="tri-col"></i></div>
      <div class="foot">
        <span class="btn pri">确定</span><span class="btn">取消</span>
        <span class="wm">UG爱好者论坛@禾丶先</span>
      </div>
    </div>
  </main>
</div>
<script src="app.js"></script>
</body>
</html>
```
FILE: styles.css
```css
* { box-sizing: border-box; }
html, body { margin: 0; padding: 0; width: 1361px; height: 957px; overflow: hidden; background: #fff; }
body { font-family: "Noto Sans", "Noto Sans CJK SC", sans-serif; font-size: 12px; color: #222; }
.defs { position: absolute; }
i { display: block; }
.app { width: 1361px; height: 957px; display: flex; flex-direction: column; overflow: hidden; }

/* ribbon */
.ribbon { height: 79px; flex: none; display: flex; border-bottom: 1px solid #dcdcdc; overflow: hidden; }
.group { height: 74px; border-right: 1px solid #d8d8d8; flex: none; }
.g1 { width: 929px; }
.g2 { width: 391px; padding-left: 4px; }
.g3 { flex: 1; padding: 0 0 0 9px; display: flex; flex-direction: column; gap: 14px; }
.g3-row { display: flex; align-items: center; gap: 4px; color: #c8c8c8; white-space: nowrap; }
.panel { display: flex; height: 56px; }
.boxes { flex: 1; border: solid #d8d8d8; border-width: 0 1px 2px 0; overflow: hidden; min-width: 0; }
.g2 .boxes { border-left-width: 1px; }
.row { display: flex; height: 24px; }
.row:first-child { margin-top: -5px; margin-bottom: 7px; }
.r31 { margin-left: -20px; }
.r31 .ic { width: 24px; height: 24px; margin: 0 3.500px; flex: none; }
.r46 { margin-left: -9px; }
.r46:first-child { margin-top: 1px; margin-bottom: 1px; }
.r46 .ic { width: 24px; height: 24px; margin: 0 11px; flex: none; }
.ic { width: 24px; height: 24px; flex: none; display: block; overflow: visible; }
.withcaret { position: relative; display: block; width: 46px; flex: none; }
.withcaret .tri-mini { position: absolute; right: -2px; top: 2px; }
.scroller { width: 18px; flex: none; display: flex; flex-direction: column; align-items: center; }
.tri-up { margin-top: 0; width: 0; height: 0; border: 3px solid transparent; border-top: 0; border-bottom: 4px solid #bdbdbd; }
.tri-dn { margin-top: 16px; width: 0; height: 0; border: 3px solid transparent; border-bottom: 0; border-top: 4px solid #bdbdbd; }
.more { margin-top: 14px; width: 7px; height: 7px; position: relative; border-top: 1px solid #111; }
.more::after { content: ""; position: absolute; left: 0; top: 2px; border: 3.500px solid transparent; border-bottom: 0; border-top: 4px solid #111; }
.caption { display: flex; align-items: center; height: 22px; padding-top: 4px; color: #1a76a0; font-size: 12px; letter-spacing: -.47px; white-space: nowrap; }
.cap1 span { margin-left: 275px; }
.cap2 span { margin-left: 59px; }
.cap1 .tri-mini { margin-left: 396px; }
.cap2 .tri-mini { margin-left: 70px; }
.tri-mini { width: 0; height: 0; border: 3px solid transparent; border-bottom: 0; border-top: 4px solid #222; flex: none; }

/* toolbar */
.toolbar { height: 29px; flex: none; display: flex; align-items: center; border-bottom: 2px solid #a8a8a8; }
.select { height: 21px; border: 1px solid #777; display: flex; align-items: center; justify-content: space-between; padding: 0 6px 0 2px; font-size: 11px; flex: none; }
.s1 { width: 134px; margin-left: -1px; }
.s2 { width: 156px; margin-left: 6px; }
.tri-sel { width: 0; height: 0; border: 3.500px solid transparent; border-bottom: 0; border-top: 4px solid #111; }
.ti { width: 20px; height: 20px; display: block; flex: none; overflow: visible; }
.ti-filter { margin-left: 8px; }
.ti-a { margin-left: 9px; }
.car-a { margin-left: 1px; }
.car-b { margin-left: 4px; }
.ti-b { margin-left: 8px; }
.ti-c { margin-left: 6px; }
.ti-d { margin-left: 4px; }
.ti-e { margin-left: 9px; }
.on { width: 23px; height: 23px; background: #c9e2ea; display: flex; align-items: center; justify-content: center; flex: none; }
.ti-f { margin-left: 3px; }
.tsep { width: 1px; height: 20px; background: #d4d4d4; flex: none; }
.sep-a { margin-left: 7px; }
.ti-g { margin-left: 9px; }
.ti-h { margin-left: 2px; }
.ti-i { margin-left: 3px; }
.sep-b { margin-left: 8px; }
.verify { margin-left: 8px; color: #cfcfcf; font-size: 11px; width: 81px; white-space: nowrap; }
.sep-c { margin-left: 7px; }

/* work area */
.work { flex: 1; display: flex; position: relative; min-height: 0; }
.viewport { width: 1018px; flex: none; padding-top: 46px; position: relative; }
.scene { display: block; border-top: 2px solid #00618a; background: linear-gradient(#b4b5b7, #cbccce 45%, #dcddde 75%, #e9eaeb); overflow: hidden; height: 803px; box-sizing: border-box; }
.solid { fill: #f7a24b; }
.brown { fill: #bd9a62; }
.brown2 { fill: #a37a42; }
.surf { fill: url(#surfV); }
.surf-h { fill: url(#surfH); }
.seam { fill: none; stroke: #4a4a40; stroke-width: 1; }
.edge-d { fill: none; stroke: #333; stroke-width: 1.500; }
.edge-r { fill: none; stroke: #f00f1a; stroke-width: 2.500; stroke-linejoin: round; }
.edge-c { fill: none; stroke: #19f3f0; stroke-width: 2; stroke-linejoin: round; }
.edge-p { fill: none; stroke: #f7cfe0; stroke-width: 3; }
.edge-y { fill: none; stroke: #f6a800; stroke-width: 2; }
.line-o { fill: none; stroke: #f7a24b; stroke-width: 1.500; }
.dash-b { fill: none; stroke: #0a14e6; stroke-width: 2.500; stroke-dasharray: 6 9; }
.dash-f { fill: none; stroke: #4a5be0; stroke-width: 1.500; stroke-dasharray: 5 10; }
.ticks { fill: none; stroke: #4a3a28; stroke-width: 1; }
.ticks-r { fill: none; stroke: #d8161c; stroke-width: 1; stroke-dasharray: 2 3; }
.dot { fill: #f7a24b; }
.dot-in { fill: #c8c8c8; }
.ax-g { fill: #2c8c22; }
.ax-b { fill: #0a3aa8; }
.ax-r { fill: #e23a3a; }
.lb { font: 13px "Liberation Sans", sans-serif; }
.lb-b { fill: #2f55e8; }
.lb-g { fill: #3f9c3f; }
.lb-r { fill: #cf3f3f; opacity: .75; }
.corner { fill: none; stroke: #999; }

.side { width: 36px; flex: none; margin-top: 21px; border-right: 1px solid #bdbdbd; padding: 9px 0 0 5px; display: flex; flex-direction: column; }
.mini { width: 22px; height: 25px; display: block; margin-bottom: 7px; }
.side-sep { width: 27px; margin: 0 0 12px 0; border: 0; border-top: 1px solid #ddd; height: 0; }
.sic { width: 24px; height: 24px; display: block; margin: -2px 0 10px 1px; flex: none; overflow: visible; }

.nav { flex: 1; min-width: 0; padding: 25px 0 0 13px; overflow: hidden; }
.nav-title { display: flex; align-items: center; height: 20px; }
.chk { width: 12px; height: 11px; border: 1.500px solid #111; border-top-width: 2px; margin-right: 11px; }
.nav-tools { display: flex; align-items: center; height: 32px; margin-top: 8px; margin-left: 4px; }
.ni { width: 24px; height: 24px; display: block; overflow: visible; }
.n1 { margin-right: 10px; }
.n2 { margin-right: 6px; }
.n4 { margin-left: 6px; }
.ni-on { width: 32px; height: 32px; background: #c9e2ea; display: flex; align-items: center; justify-content: center; }
.ni-box { width: 32px; height: 32px; border: 2px solid #d4d4d4; display: flex; align-items: center; justify-content: center; }
.nb1 { margin-left: 8px; }
.nb2 { margin-left: 4px; }
.tbl { margin-top: 3px; border: 1px solid #e2e2e2; border-right: 0; width: 320px; }
.thead { display: flex; height: 21px; background: #f0f0f0; border-bottom: 1px solid #dedede; align-items: center; }
.thead span { padding-left: 6px; border-right: 1px solid #dcdcdc; height: 100%; display: flex; align-items: center; flex: none; white-space: nowrap; }
.thead .c0 { padding-left: 8px; }
.c0 { width: 202px; flex: none; }
.c1 { width: 31px; flex: none; }
.c2 { width: 26px; flex: none; }
.c3 { width: 26px; flex: none; }
.c4 { width: 36px; flex: none; }
.tr { display: flex; height: 20px; border-bottom: 1px solid #ececec; align-items: stretch; }
.alt { background: #f8f8f8; }
.tr > span { display: flex; align-items: center; border-right: 1px solid #ececec; white-space: nowrap; flex: none; }
.tr > .c0 { border-right: 2px solid #111; }
.tr > .c1 { width: 30px; }
.tr b { font-weight: 400; font-size: 12px; }
.lv1 { padding-left: 7px; }
.lv2 { padding-left: 29px; }
.lv3 { padding-left: 27px; }
.lv4 { padding-left: 46px; }
.lv5 { padding-left: 67px; }
.lv1 b { margin-left: 1px; }
.lv2 b { margin-left: 3px; }
.lv3 b, .lv4 b { margin-left: 1px; }
.tg { width: 9px; height: 9px; border: 1px solid #ccc; background: #fff; position: relative; flex: none; }
.tg::before { content: ""; position: absolute; left: 1px; right: 1px; top: 3px; height: 1px; background: #333; }
.tg-p::after { content: ""; position: absolute; top: 1px; bottom: 1px; left: 3px; width: 1px; background: #333; }
.stub { height: 0; border-top: 1px dotted #888; flex: none; position: relative; }
.s5 { width: 5px; margin-right: 1px; }
.s7 { width: 7px; }
.s9 { width: 10px; margin-right: 1px; }
.up::before { content: ""; position: absolute; left: 0; bottom: 0; height: 13px; border-left: 1px dotted #888; }
.fi { width: 16px; height: 16px; display: block; flex: none; overflow: visible; }
.warn { width: 3px; height: 15px; background: linear-gradient(#f6a623 0 10px, transparent 10px 12px, #f6a623 12px); margin: 0 8px 0 6px; flex: none; }
.selname { background: #cbe3ea; height: 19px; line-height: 19px; flex: 1; padding-left: 2px; }
.hl { background: #cbe3ea; padding-left: 6px; justify-content: flex-start; }
.mark { width: 16px; height: 16px; display: block; flex: none; }
.ok { fill: none; stroke: #26c52c; stroke-width: 2; }
.no { fill: none; stroke: #444; stroke-width: 1.200; }

/* floating dialog */
.dialog { position: absolute; left: 828px; top: 224px; width: 576px; height: 625px; background: #efefef; border-left: 1px solid #cfcfcf; display: flex; flex-direction: column; }
.dlg-title { height: 24px; flex: none; background: #00618a; color: #fff; display: flex; align-items: center; padding-left: 8px; font-size: 14px; gap: 8px; white-space: nowrap; word-spacing: 3.500px; margin-left: -1px; }
.dlg-gear { width: 13px; height: 13px; display: block; flex: none; }
.search { height: 38px; flex: none; display: flex; align-items: center; padding: 1px 10px 0 9px; }
.bino { width: 24px; height: 24px; display: block; flex: none; }
.search-l { margin-left: 2px; }
.search-in { flex: 1; height: 23px; border: 1px solid #8a8a8a; background: #fff; margin-left: 6px; padding: 3px 2px; }
.caret { width: 1px; height: 16px; background: #111; margin-left: 1px; }
.dlg-body { height: 451px; flex: none; display: flex; padding-left: 11px; }
.tree { width: 168px; flex: none; margin: 0; padding: 1px 1px 0; list-style: none; background: #fff; border: 2px solid #e2e2e2; position: relative; }
.tree::before { content: ""; position: absolute; left: 8px; top: 3px; height: 189px; border-left: 1px dotted #888; }
.tree li { height: 20px; line-height: 19px; border-bottom: 1px solid #ebebeb; padding-left: 21px; position: relative; }
.tree li:nth-child(even) { background: #f8f8f8; }
.tree li:not(.e)::before { content: ""; position: absolute; left: 9px; top: 10px; width: 10px; border-top: 1px dotted #888; }
.tree .tg-p { position: absolute; left: 3px; top: 5px; z-index: 1; }
.tree .cur { background: #f8f8f8; padding-left: 0; }
.tree .cur span { display: block; margin-left: 19px; padding-left: 2px; background: #cbe3ea; height: 19px; }
.pane { flex: 1; margin-left: 9px; border: solid #dcdcdc; border-width: 0 0 2px 2px; }
.card { height: 107px; background: #fff; border-top: 2px solid #dcdcdc; border-bottom: 2px solid #cfcfcf; }
.sec-h { display: flex; align-items: center; height: 24px; color: #1a76a0; font-size: 14px; padding-left: 7px; }
.tri-sec { width: 0; height: 0; border: 5px solid transparent; border-bottom: 0; border-top: 5px solid #00618a; margin-right: 7px; }
.card .sec-h { height: 23px; margin-bottom: 5px; }
.prop { display: flex; align-items: center; justify-content: space-between; height: 34px; padding: 0 13px 0 8px; }
.pbtn { width: 32px; height: 32px; border: 1px solid #777; background: #fff; }
.ops { margin: 2px 0 0 9px; height: 72px; background: #fff; border-bottom: 2px solid #cfcfcf; flex: none; }
.ops .sec-h { height: 24px; }
.ops-btns { display: flex; justify-content: center; gap: 1px; margin-top: 7px; }
.obtn { width: 33px; height: 33px; border: 1px solid #777; background: #fff; display: flex; align-items: center; justify-content: center; }
.obtn svg { width: 28px; height: 28px; display: block; overflow: visible; }
.collapse { height: 22px; border-bottom: 2px solid #d4d4d4; margin-left: 5px; display: flex; justify-content: center; padding: 10px 0 0 5px; flex: none; }
.tri-col { width: 0; height: 0; border: 5px solid transparent; border-top: 0; border-bottom: 5px solid #111; }
.foot { flex: 1; display: flex; justify-content: flex-end; align-items: flex-start; gap: 5px; padding: 7px 5px 0 0; position: relative; }
.btn { width: 54px; height: 24px; border: 1px solid #777; background: #fff; text-align: center; line-height: 22px; }
.pri { background: #00618a; color: #fff; border-color: #00618a; }
.wm { position: absolute; left: 376px; top: -6px; font: 15px "Liberation Mono", "Noto Sans CJK SC", monospace; color: #7b7b7b; letter-spacing: .8px; white-space: nowrap; text-shadow: 0 0 1px #fff; }
```
FILE: app.js
```js
// Toolpath hatching for the 3D scene: each band is drawn as lines running
// between two boundary curves sampled at equal fractions of their length.
const BANDS = [
  { inner: [[181,551],[197,560]], outer: [[192,497],[208,503]], n: 8, w: 1.3 },
  { inner: [[197,561],[200,561]], outer: [[207,505],[210,505]], n: 2, w: 1.3 },
  { inner: [[209,561],[260,564],[300,564],[343,561],[400,552],[440,544]], outer: [[220,506],[330,507],[397,502],[448,491]], n: 105, w: 1.4 },
  { inner: [[497,542],[510,549],[517,555]], outer: [[487,486],[530,497],[560,512]], n: 44, w: 1.2 },
  { inner: [[521,552],[530,564],[536,577],[537,588],[533,602],[523,613]], outer: [[560,512],[570,520],[583,533],[597,558],[602,587],[597,620],[583,640],[562,660]], n: 34, w: 1.8 },
  { inner: [[523,613],[505,619]], outer: [[562,660],[537,669],[522,672]], n: 9, w: 1.8 },
  { inner: [[505,617],[480,621]], outer: [[522,672],[440,677]], n: 44, w: 1.2 },
  { inner: [[159,641],[177,642]], outer: [[147,697],[167,698]], n: 8, w: 1.3 },
  { inner: [[189,643],[277,643],[330,640],[363,635],[417,627]], outer: [[175,699],[260,697],[330,692],[405,680]], n: 110, w: 1.4 }
];
const NS = "http://www.w3.org/2000/svg";

function lengths(pts) {
  const out = [0];
  for (let i = 1; i < pts.length; i++) {
    out.push(out[i - 1] + Math.hypot(pts[i][0] - pts[i - 1][0], pts[i][1] - pts[i - 1][1]));
  }
  return out;
}

function at(pts, t) {
  const len = lengths(pts);
  const d = t * len[len.length - 1];
  let i = 1;
  while (i < pts.length - 1 && len[i] < d) i++;
  const k = (d - len[i - 1]) / (len[i] - len[i - 1] || 1);
  return [pts[i - 1][0] + (pts[i][0] - pts[i - 1][0]) * k, pts[i - 1][1] + (pts[i][1] - pts[i - 1][1]) * k];
}

const host = document.getElementById("hatch");
BANDS.forEach(function (band) {
  for (let i = 0; i <= band.n; i++) {
    const t = i / band.n;
    const a = at(band.inner, t);
    const b = at(band.outer, t);
    const line = document.createElementNS(NS, "line");
    line.setAttribute("x1", a[0].toFixed(1));
    line.setAttribute("y1", a[1].toFixed(1));
    line.setAttribute("x2", b[0].toFixed(1));
    line.setAttribute("y2", b[1].toFixed(1));
    line.setAttribute("stroke", "#f7a24b");
    line.setAttribute("stroke-width", band.w);
    host.appendChild(line);
  }
});
```
